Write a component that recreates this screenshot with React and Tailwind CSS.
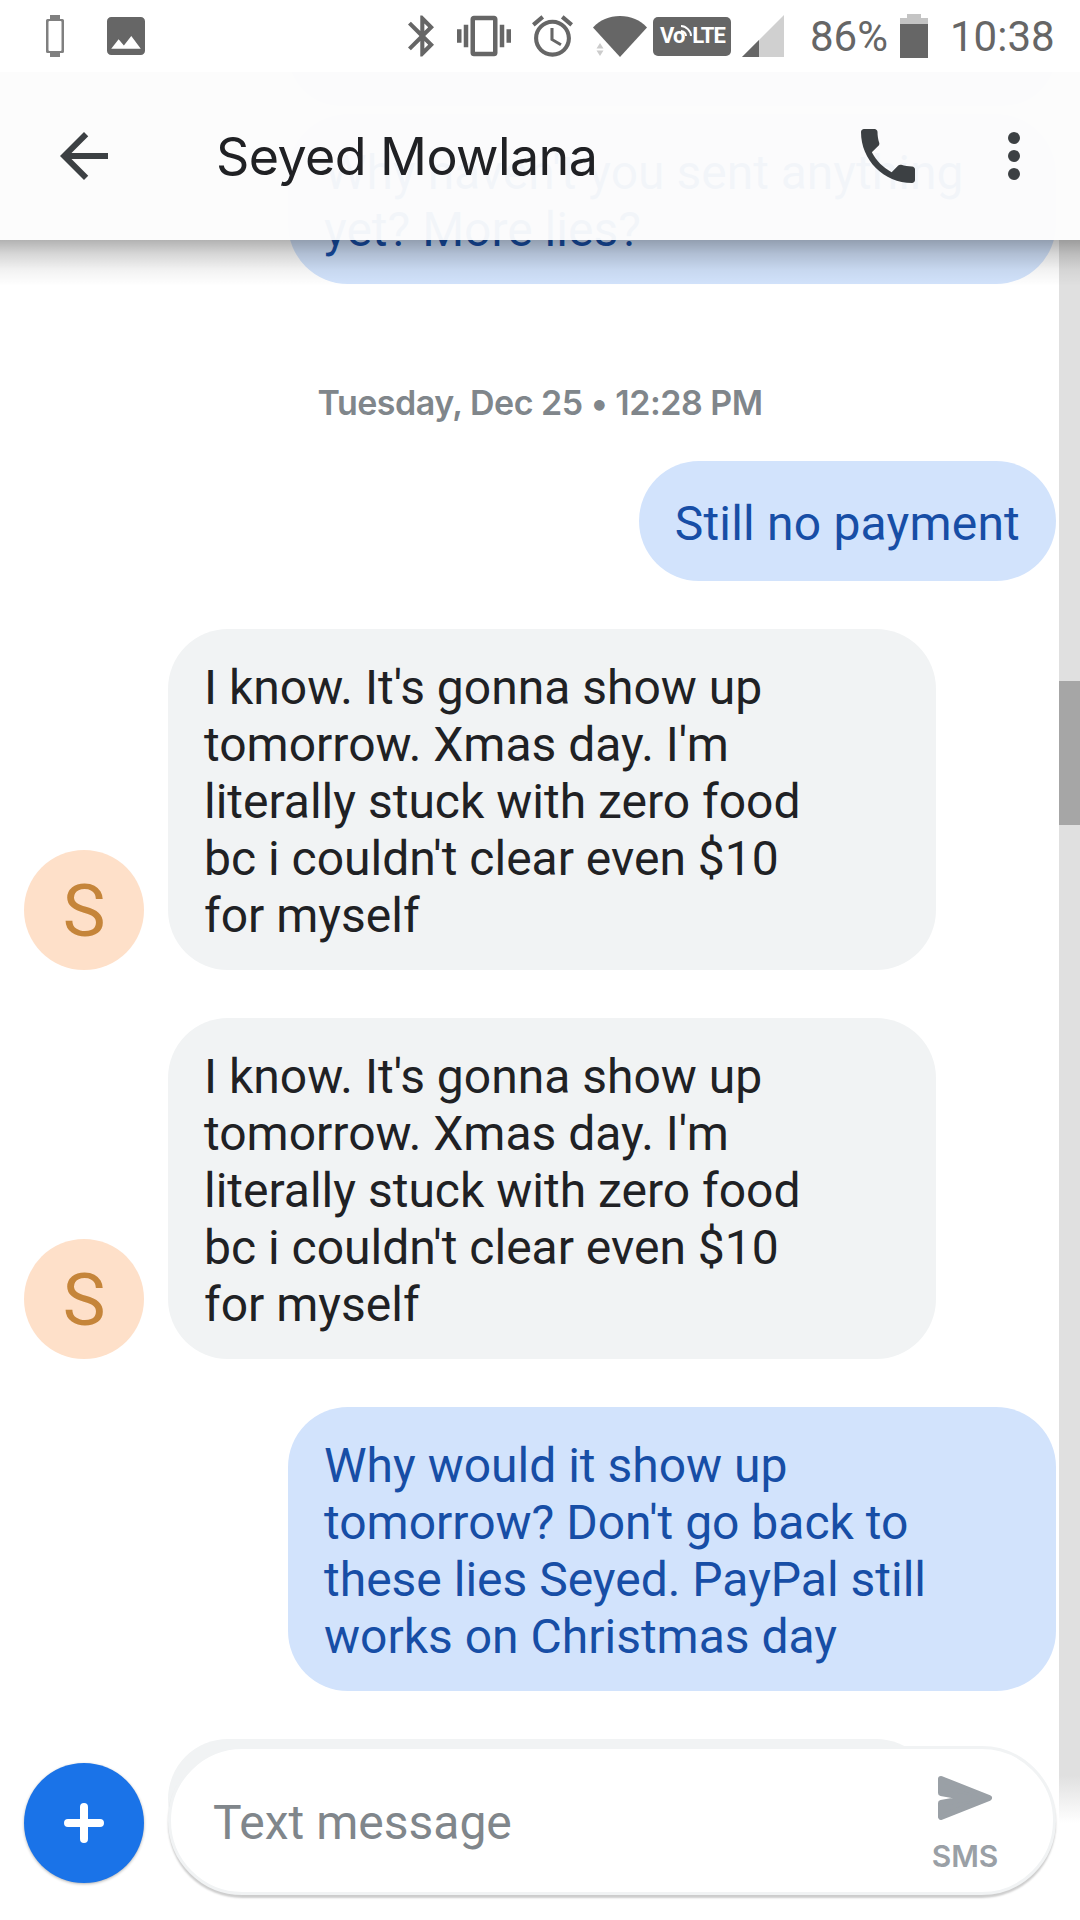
import React from "react";

function Bubble({ sent, children, className = "" }) {
  return (
    <div
      className={`flex items-center min-h-[120px] rounded-[60px] px-9 pt-[30px] pb-[26px] text-[48px] leading-[57px] whitespace-pre ${
        sent ? "bg-[#d2e3fc] text-[#174ea6]" : "bg-[#f1f3f4] text-[#202124]"
      } ${className}`}
    >
      <span>{children}</span>
    </div>
  );
}

function Avatar() {
  return (
    <div className="w-[120px] h-[120px] pt-[4px] rounded-full bg-[#fee0c9] flex items-center justify-center text-[72px] font-[385] text-[#c5853a] shrink-0">
      S
    </div>
  );
}

function Received({ children }) {
  return (
    <div className="flex items-end gap-6 pl-6">
      <Avatar />
      <Bubble className="w-[768px]">{children}</Bubble>
    </div>
  );
}

function StatusBar() {
  return (
    <div className="absolute top-0 left-0 w-full h-[72px] bg-white flex items-center text-[#666666] text-[42px] z-20">
      <svg className="ml-[46px]" width="18" height="42" viewBox="0 0 18 42">
        <path d="M4 0h10v4h2.500a1.500 1.500 0 0 1 1.500 1.500v31a1.500 1.500 0 0 1-1.500 1.500H14v4H4v-4H1.500A1.500 1.500 0 0 1 0 36.500v-31A1.500 1.500 0 0 1 1.500 4H4z" fill="#808080" />
        <rect x="2.500" y="6" width="13" height="30" rx="1" fill="#fff" />
      </svg>
      <svg className="ml-[43px]" width="38" height="38" viewBox="3 3 18 18">
        <path d="M21 19V5c0-1.100-.9-2-2-2H5c-1.100 0-2 .9-2 2v14c0 1.100.9 2 2 2h14c1.100 0 2-.9 2-2zM8.500 13.500l2.500 3.010L14.500 12l4.500 6H5l3.500-4.500z" fill="#666" />
      </svg>
      <svg className="ml-[263px]" width="26" height="42" viewBox="5 2 12.710 20">
        <path d="M17.710 7.710L12 2h-1v7.590L6.410 5 5 6.410 10.590 12 5 17.590 6.410 19 11 14.410V22h1l5.710-5.710-4.300-4.290 4.300-4.290zM13 5.830l1.880 1.880L13 9.590V5.830zm1.880 10.460L13 18.170v-3.760l1.880 1.880z" fill="#666" />
      </svg>
      <svg className="ml-[23px]" width="54" height="42" viewBox="0 3 24 18">
        <path d="M0 15h2V9H0v6zm3 2h2V7H3v10zm19-8v6h2V9h-2zm-3 8h2V7h-2v10zM16.500 3h-9C6.670 3 6 3.670 6 4.500v15c0 .83.67 1.500 1.500 1.500h9c.83 0 1.500-.67 1.500-1.500v-15c0-.83-.67-1.500-1.500-1.500zM16 19H8V5h8v14z" fill="#666" />
      </svg>
      <svg className="ml-[21px]" width="41" height="42" viewBox="2 1.860 20 20.140">
        <path d="M22 5.720l-4.600-3.860-1.290 1.530 4.600 3.860L22 5.720zM7.880 3.390L6.600 1.860 2 5.710l1.290 1.530 4.590-3.850zM12.500 8H11v6l4.750 2.850.75-1.230-4-2.370V8zM12 4c-4.970 0-9 4.030-9 9s4.030 9 9 9c4.970 0 9-4.030 9-9s-4.030-9-9-9zm0 16c-3.870 0-7-3.130-7-7s3.130-7 7-7 7 3.130 7 7-3.130 7-7 7z" fill="#666" />
      </svg>
      <svg className="ml-[20px]" width="54" height="42" viewBox="0 0 54 42">
        <path d="M0 12.500C7 5 16 1 27 1s20 4 27 11.500L27 42z" fill="#666" />
        <path d="M7 28l3.500 5.500h-7zM7 41l3.500-5.500h-7z" fill="#cccccc" />
      </svg>
      <div className="ml-[6px] w-[78px] h-[39px] rounded-[5px] bg-[#666666] flex items-center pl-[7px] text-white text-[22px] leading-none font-bold tracking-[-1px]">
        <span>Vo</span>
        <svg className="-ml-[4px] -mt-[10px]" width="12" height="12" viewBox="0 0 12 12" fill="none" stroke="#fff" strokeWidth="2">
          <path d="M1 1c5 0 10 5 10 10M1 6c2.500 0 5 2.500 5 5" />
        </svg>
        <span>LTE</span>
      </div>
      <svg className="ml-[11px]" width="42" height="42" viewBox="0 0 42 42">
        <path d="M0 42 42 0v42z" fill="#d0d0d0" />
        <path d="M0 42 17 25v17z" fill="#666" />
      </svg>
      <span className="ml-[26px] w-[76px] whitespace-nowrap">86%</span>
      <svg className="ml-[14px]" width="28" height="44" viewBox="0 0 28 44">
        <rect x="7" y="0" width="14" height="5" fill="#c4c4c4" />
        <rect x="0" y="4" width="28" height="6" fill="#c4c4c4" />
        <rect x="0" y="10" width="28" height="34" fill="#666" />
      </svg>
      <span className="ml-[22px] whitespace-nowrap">10:38</span>
    </div>
  );
}

function AppBar() {
  return (
    <>
      <div className="absolute top-[72px] left-0 w-full h-[168px] bg-[#fcfcfc]/96 flex items-center text-[#3c4043] z-10">
        <svg className="ml-[48px] shrink-0" width="72" height="72" viewBox="0 0 24 24" fill="currentColor">
          <path d="M20 11H7.830l5.590-5.590L12 4l-8 8 8 8 1.410-1.410L7.830 13H20v-2z" />
        </svg>
        <span className="ml-[96px] mt-[2px] font-['Inter',sans-serif] text-[52px] tracking-[-0.6px] text-[#202124] whitespace-nowrap">
          Seyed Mowlana
        </span>
        <svg className="ml-auto" width="72" height="72" viewBox="0 0 24 24" fill="currentColor">
          <path d="M6.620 10.790c1.440 2.830 3.760 5.140 6.590 6.590l2.200-2.200c.27-.27.67-.36 1.020-.24 1.120.37 2.330.57 3.570.57.55 0 1 .45 1 1V20c0 .55-.45 1-1 1-9.390 0-17-7.610-17-17 0-.55.45-1 1-1h3.500c.55 0 1 .45 1 1 0 1.250.2 2.450.57 3.570.11.35.03.74-.25 1.020l-2.200 2.200z" />
        </svg>
        <svg className="ml-[84px] mr-[60px]" width="12" height="48" viewBox="0 0 12 48" fill="currentColor">
          <circle cx="6" cy="6" r="6" />
          <circle cx="6" cy="24" r="6" />
          <circle cx="6" cy="42" r="6" />
        </svg>
      </div>
      {/* drop shadow cast by the app bar over the conversation */}
      <div className="absolute top-[240px] left-0 w-full h-[46px] bg-[linear-gradient(to_bottom,rgba(0,0,0,0.3),rgba(0,0,0,0.16)_30%,rgba(0,0,0,0.05)_65%,rgba(0,0,0,0))] z-10" />
    </>
  );
}

function Composer() {
  return (
    <div className="absolute left-0 top-[1746px] w-full flex items-center pl-6 gap-6 z-10">
      <div className="w-[120px] h-[120px] mt-[5px] rounded-full bg-[#1a73e8] shadow-[0_1px_3px_rgba(0,0,0,0.3)] flex items-center justify-center">
        <svg width="40" height="40" viewBox="0 0 40 40" stroke="#fff" strokeWidth="8" strokeLinecap="round">
          <path d="M20 4v32M4 20h32" />
        </svg>
      </div>
      <div className="w-[888px] h-[149px] rounded-[75px] bg-white border-[3px] border-[#f1f3f4] shadow-[0_3px_2px_rgba(0,0,0,0.2)] flex items-center pl-[42px] text-[48px] text-[#80868b]">
        <span className="mt-[4px]">Text message</span>
        <div className="ml-auto mr-[55px] mt-[5px] w-[66px] flex flex-col items-center text-[#9aa0a6]">
          <svg width="56" height="46" viewBox="0 0 56 46" fill="#9aa0a6" stroke="#9aa0a6" strokeWidth="6" strokeLinejoin="round">
            <path d="M4 4l48 19L4 42V28l28-5L4 18z" />
          </svg>
          <span className="mt-[20px] font-['Inter',sans-serif] text-[30px] leading-[30px] font-semibold">SMS</span>
        </div>
      </div>
    </div>
  );
}

export default function App() {
  const stuck =
    "I know. It's gonna show up\ntomorrow. Xmas day. I'm\nliterally stuck with zero food\nbc i couldn't clear even $10\nfor myself";
  return (
    <div className="relative w-[1080px] h-[1920px] overflow-hidden bg-white font-['Roboto',sans-serif]">
      <StatusBar />

      {/* conversation, scrolled so the earlier bubbles slide under the app bar */}
      <div className="flex flex-col">
        <div className="flex justify-end pr-6">
          <div className="w-[768px] h-[106px] rounded-[60px] bg-[#d2e3fc]" />
        </div>
        <div className="mt-2 flex justify-end pr-6">
          <Bubble sent className="w-[768px]">{"Why haven't you sent anything\nyet? More lies?"}</Bubble>
        </div>
        <div className="mt-[100px] text-center font-['Inter',sans-serif] text-[34px] leading-[38px] font-semibold tracking-[-0.5px] text-[#80868b]">
          Tuesday, Dec 25 • 12:28 PM
        </div>
        <div className="mt-[39px] flex justify-end pr-6">
          <Bubble sent className="tracking-[0.2px]">Still no payment</Bubble>
        </div>
        <div className="mt-12">
          <Received>{stuck}</Received>
        </div>
        <div className="mt-12">
          <Received>{stuck}</Received>
        </div>
        <div className="mt-12 flex justify-end pr-6">
          <Bubble sent className="w-[768px]">{"Why would it show up\ntomorrow? Don't go back to\nthese lies Seyed. PayPal still\nworks on Christmas day"}</Bubble>
        </div>
        <div className="mt-12 ml-[168px] w-[768px] h-[120px] rounded-[60px] bg-[#f1f3f4]" />
      </div>

      {/* scrollbar */}
      <div className="absolute top-[240px] right-0 w-[21px] h-[1583px] bg-[linear-gradient(to_bottom,#e0e0e0_0%,#e0e0e0_97%,#ffffff_100%)]">
        <div className="mt-[441px] h-[144px] bg-[#a6a6a6]" />
      </div>

      <AppBar />
      <Composer />
    </div>
  );
}
